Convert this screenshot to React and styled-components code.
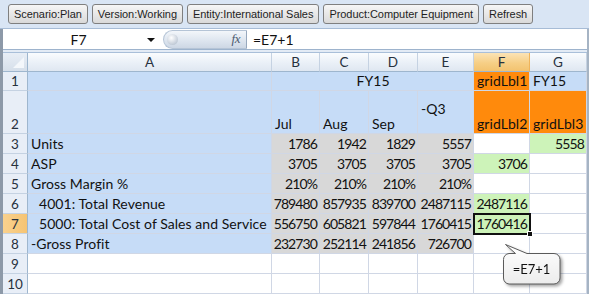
import styled, { createGlobalStyle } from 'styled-components';

const GlobalStyle = createGlobalStyle`
  * { box-sizing: border-box; }
  body { margin: 0; background: #fff; font-family: "Lato", "Open Sans", sans-serif; }
`;

const BLUE = '#c6dcf7';
const GRAY = '#d8d8d8';
const GREEN = '#cdf3b9';
const ORANGE = '#ff8a0c';
const WHITE = '#ffffff';

const filters = ['Scenario:Plan', 'Version:Working', 'Entity:International Sales', 'Product:Computer Equipment', 'Refresh'];
const columns = ['A', 'B', 'C', 'D', 'E', 'F', 'G'];

const num = (t, bg = GRAY) => ({ t, bg, align: 'right' });

const rows = [
  { cells: [
    { bg: BLUE }, { t: 'FY15', bg: BLUE, span: 4, align: 'center' },
    { t: 'gridLbl1', bg: ORANGE }, { t: 'FY15', bg: BLUE },
  ] },
  { cells: [
    { bg: BLUE }, { t: 'Jul', bg: BLUE }, { t: 'Aug', bg: BLUE }, { t: 'Sep', bg: BLUE },
    { t: '-Q3', bg: BLUE, lift: true }, { t: 'gridLbl2', bg: ORANGE }, { t: 'gridLbl3', bg: ORANGE },
  ] },
  { cells: [{ t: 'Units', bg: BLUE }, num('1786'), num('1942'), num('1829'), num('5557'), { bg: WHITE }, num('5558', GREEN)] },
  { cells: [{ t: 'ASP', bg: BLUE }, num('3705'), num('3705'), num('3705'), num('3705'), num('3706', GREEN), { bg: WHITE }] },
  { cells: [{ t: 'Gross Margin %', bg: BLUE }, num('210%'), num('210%'), num('210%'), num('210%'), { bg: WHITE }, { bg: WHITE }] },
  { cells: [{ t: '4001: Total Revenue', bg: BLUE, indent: true }, num('789480'), num('857935'), num('839700'), num('2487115'), num('2487116', GREEN), { bg: WHITE }] },
  { active: true, cells: [{ t: '5000: Total Cost of Sales and Service', bg: BLUE, indent: true }, num('556750'), num('605821'), num('597844'), num('1760415'), { ...num('1760416', GREEN), selected: true }, { bg: WHITE }] },
  { cells: [{ t: '-Gross Profit', bg: BLUE }, num('232730'), num('252114'), num('241856'), num('726700'), { bg: WHITE }, { bg: WHITE }] },
  { cells: [{}, {}, {}, {}, {}, {}, {}] },
  { cells: [{}, {}, {}, {}, {}, {}, {}] },
];

export default function App() {
  return (
    <>
      <GlobalStyle />
      <Page>
        <Toolbar>
          {filters.map((f) => <FilterButton key={f}>{f}</FilterButton>)}
        </Toolbar>
        <Workbook>
          <FormulaBar>
            <NameBox>
              <span>F7</span>
              <Caret />
            </NameBox>
            <FxPill>
              <Dimple />
              <Fx>fx</Fx>
            </FxPill>
            <Formula>=E7+1</Formula>
          </FormulaBar>
          <Splitter />
          <Sheet>
            <Corner />
            {columns.map((c) => <ColHead key={c} $active={c === 'F'}>{c}</ColHead>)}
            {rows.map((r, i) => (
              <Row key={i} r={r} n={i + 1} />
            ))}
            <Callout>
              <svg width="68" height="52" viewBox="0 0 68 52">
                <defs>
                  <linearGradient id="cg" x1="0" y1="0" x2="0" y2="1">
                    <stop offset="0" stopColor="#ffffff" />
                    <stop offset="1" stopColor="#ececec" />
                  </linearGradient>
                </defs>
                <path
                  d="M9 12.5 H15.5 L5.5 3.5 L27 12.5 H54 A6 6 0 0 1 60 18.5 V37 A6 6 0 0 1 54 43 H9 A6 6 0 0 1 3.5 37 V18.5 A6 6 0 0 1 9 12.5 Z"
                  fill="url(#cg)"
                  stroke="#5a5a5a"
                  strokeWidth="1"
                />
              </svg>
              <CalloutText>=E7+1</CalloutText>
            </Callout>
          </Sheet>
        </Workbook>
      </Page>
    </>
  );
}

function Row({ r, n }) {
  return (
    <>
      <RowHead $active={r.active}>{n}</RowHead>
      {r.cells.map((c, j) => (
        <Cell
          key={j}
          $bg={c.bg}
          $span={c.span}
          $align={c.align}
          $indent={c.indent}
          $lift={c.lift}
          $selected={c.selected}
        >
          {c.t}
          {c.selected && <FillHandle />}
        </Cell>
      ))}
    </>
  );
}

const Page = styled.div`
  width: 589px;
  height: 297px;
  overflow: hidden;
  background: #fff;
`;

const Toolbar = styled.div`
  height: 29px;
  display: flex;
  align-items: flex-start;
  gap: 4px;
  padding: 4px 0 0 8px;
  background: #d9e5f4;
  border-bottom: 1px solid #a7bcd6;
`;

const FilterButton = styled.button`
  height: 20px;
  padding: 0 5px;
  border: 1px solid #7f7f7f;
  border-radius: 3px;
  background: linear-gradient(#f6f6f6, #e6e6e6 55%, #d9d9d9);
  font: 11px "Liberation Sans", "DejaVu Sans", sans-serif;
  letter-spacing: -0.05px;
  color: #1e1e1e;
  white-space: nowrap;
`;

const Workbook = styled.div`
  border-left: 3px solid #8d99a8;
  border-right: 2px solid #a6b4c4;
`;

const FormulaBar = styled.div`
  height: 21px;
  display: flex;
  align-items: center;
  background: #fff;
  border-bottom: 1px solid #9db3cd;
`;

const NameBox = styled.div`
  position: relative;
  width: 157px;
  height: 100%;
  display: flex;
  align-items: center;
  justify-content: center;
  font-size: 14px;
  color: #111;
  padding-right: 6px;
`;

const Caret = styled.span`
  position: absolute;
  right: 5px;
  top: 9px;
  border-left: 4px solid transparent;
  border-right: 4px solid transparent;
  border-top: 4px solid #111;
`;

const FxPill = styled.div`
  position: relative;
  width: 84px;
  height: 19px;
  margin-left: 3px;
  border: 1px solid #b5c4d6;
  border-right: 1px solid #97a8bd;
  border-radius: 10px 0 0 10px;
  background: linear-gradient(#f3f6fa, #dce4ee 60%, #cdd7e4);
  display: flex;
  align-items: center;
  justify-content: flex-end;
  padding-right: 6px;
`;

const Dimple = styled.span`
  position: absolute;
  left: 3px;
  top: 3px;
  width: 11px;
  height: 11px;
  border-radius: 50%;
  background: radial-gradient(circle at 40% 35%, #fff, #c3ccd8 70%, #aeb9c8);
`;

const Fx = styled.span`
  font: italic 13px "Liberation Serif", serif;
  color: #4b5a6e;
  letter-spacing: -0.5px;
`;

const Formula = styled.div`
  padding-left: 6px;
  font-size: 14px;
  color: #111;
`;

const Splitter = styled.div`
  height: 3px;
  background: #e3ebf5;
  border-bottom: 1px solid #a9bfd9;
`;

const Sheet = styled.div`
  position: relative;
  display: grid;
  grid-template-columns: 25px 244px 48px 49px 49px 56px 56px 57px;
  grid-template-rows: 19px 19px 43px repeat(8, 20px);
  font-size: 14px;
  color: #111;
`;

const Corner = styled.div`
  position: relative;
  background: linear-gradient(#e8eef6, #d6dfea);
  border-right: 1px solid #9eb6ce;
  border-bottom: 1px solid #9eb6ce;
  &::after {
    content: '';
    position: absolute;
    right: 3px;
    bottom: 3px;
    border-left: 11px solid transparent;
    border-bottom: 11px solid #f4f7fb;
  }
`;

const ColHead = styled.div`
  display: flex;
  align-items: center;
  justify-content: center;
  font-size: 13.5px;
  color: #27313d;
  background: ${(p) => (p.$active
    ? 'linear-gradient(#fbe3b6, #f6cf86 55%, #f3c36f)'
    : 'linear-gradient(#fafcfe, #eaf0f7 55%, #dfe7f1)')};
  border-right: 1px solid ${(p) => (p.$active ? '#f0b45a' : '#c5d2e2')};
  border-bottom: 1px solid #9eb6ce;
`;

const RowHead = styled.div`
  display: flex;
  align-items: flex-end;
  justify-content: center;
  padding-bottom: 1px;
  font-size: 13.5px;
  color: #27313d;
  background: ${(p) => (p.$active ? 'linear-gradient(90deg, #f9d18e, #f6c473)' : '#e8eef7')};
  border-right: 1px solid #9eb6ce;
  border-bottom: 1px solid #c5d2e2;
`;

const Cell = styled.div`
  position: relative;
  grid-column: span ${(p) => p.$span || 1};
  display: flex;
  align-items: ${(p) => (p.$lift ? 'flex-start' : 'flex-end')};
  justify-content: ${(p) => (p.$align === 'right' ? 'flex-end' : p.$align === 'center' ? 'center' : 'flex-start')};
  padding: ${(p) => (p.$lift ? '9px 3px 0' : '0 2px 1px')};
  padding-left: ${(p) => (p.$indent ? '11px' : '3px')};
  background: ${(p) => p.$bg || '#fff'};
  border-right: 1px solid #d0d7e5;
  border-bottom: 1px solid #d0d7e5;
  white-space: nowrap;
  line-height: 17px;
  letter-spacing: ${(p) => (p.$align === 'right' ? '-0.9px' : '0.05px')};
  ${(p) => p.$selected && `
    outline: 2px solid #111;
    outline-offset: -1px;
    z-index: 1;
  `}
`;

const FillHandle = styled.span`
  position: absolute;
  right: -4px;
  bottom: -4px;
  width: 6px;
  height: 6px;
  background: #111;
  border: 1px solid #fff;
`;

const Callout = styled.div`
  position: absolute;
  left: 497px;
  top: 188px;
  width: 68px;
  height: 52px;
  z-index: 2;
  filter: drop-shadow(2px 2px 1.5px rgba(0, 0, 0, 0.35));
  svg { display: block; }
`;

const CalloutText = styled.span`
  position: absolute;
  left: 3px;
  top: 13px;
  width: 57px;
  height: 30px;
  display: flex;
  align-items: center;
  justify-content: center;
  font-size: 13px;
  color: #111;
`;
